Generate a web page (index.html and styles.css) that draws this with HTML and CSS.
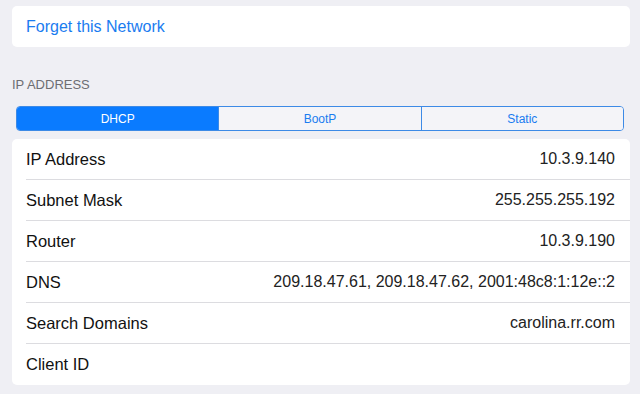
FILE: index.html
```html
<!DOCTYPE html>
<html lang="en">
<head>
    <meta charset="UTF-8">
    <meta name="viewport" content="width=device-width, initial-scale=1.0">
    <title>Wi-Fi Network</title>
    <link rel="stylesheet" href="styles.css">
</head>
<body>

<div class="settings">
    <div class="card forget">
        <div class="row action">Forget this Network</div>
    </div>

    <div class="section-title">IP ADDRESS</div>

    <div class="segmented">
        <button class="segment active">DHCP</button>
        <button class="segment">BootP</button>
        <button class="segment">Static</button>
    </div>

    <div class="card details">
        <div class="row"><span class="label">IP Address</span><span class="value">10.3.9.140</span></div>
        <div class="row"><span class="label">Subnet Mask</span><span class="value">255.255.255.192</span></div>
        <div class="row"><span class="label">Router</span><span class="value">10.3.9.190</span></div>
        <div class="row"><span class="label">DNS</span><span class="value">209.18.47.61, 209.18.47.62, 2001:48c8:1:12e::2</span></div>
        <div class="row"><span class="label">Search Domains</span><span class="value">carolina.rr.com</span></div>
        <div class="row"><span class="label">Client ID</span><span class="value"></span></div>
    </div>
</div>

</body>
</html>
```

FILE: styles.css
```css
    body {
        font-family: 'Liberation Sans', Arial, sans-serif;
        margin: 0;
        background-color: #efeff4;
        color: #111;
    }
    .settings {
        padding: 6px 10px 10px 12px;
    }
    .card {
        background: white;
        border-radius: 5px;
    }
    .row {
        display: flex;
        justify-content: space-between;
        align-items: center;
        height: 40px;
        margin-left: 14px;
        padding-right: 15px;
        font-size: 16.5px;
        border-bottom: 1px solid #dcdce0;
    }
    .row:last-child {
        height: 41px;
        border-bottom: none;
    }
    .forget .row {
        height: 41px;
        font-size: 16px;
    }
    .action {
        color: #1a7cf0;
    }
    .value {
        color: #222;
        font-size: 16px;
    }
    .section-title {
        margin-top: 30px;
        font-size: 13px;
        color: #6d6d72;
        line-height: 16px;
    }
    .segmented {
        display: flex;
        margin: 13px 6px 8px 4px;
        border: 1px solid #3d8ae6;
        border-radius: 4px;
        overflow: hidden;
    }
    .segment {
        flex: 1;
        height: 23px;
        padding: 0;
        border: none;
        border-left: 1px solid #3d8ae6;
        background: #f4f4f8;
        color: #1a7cf0;
        font-family: inherit;
        font-size: 12px;
    }
    .segment:first-child {
        border-left: none;
    }
    .segment.active {
        background-color: #0a7bff;
        color: white;
    }
```
